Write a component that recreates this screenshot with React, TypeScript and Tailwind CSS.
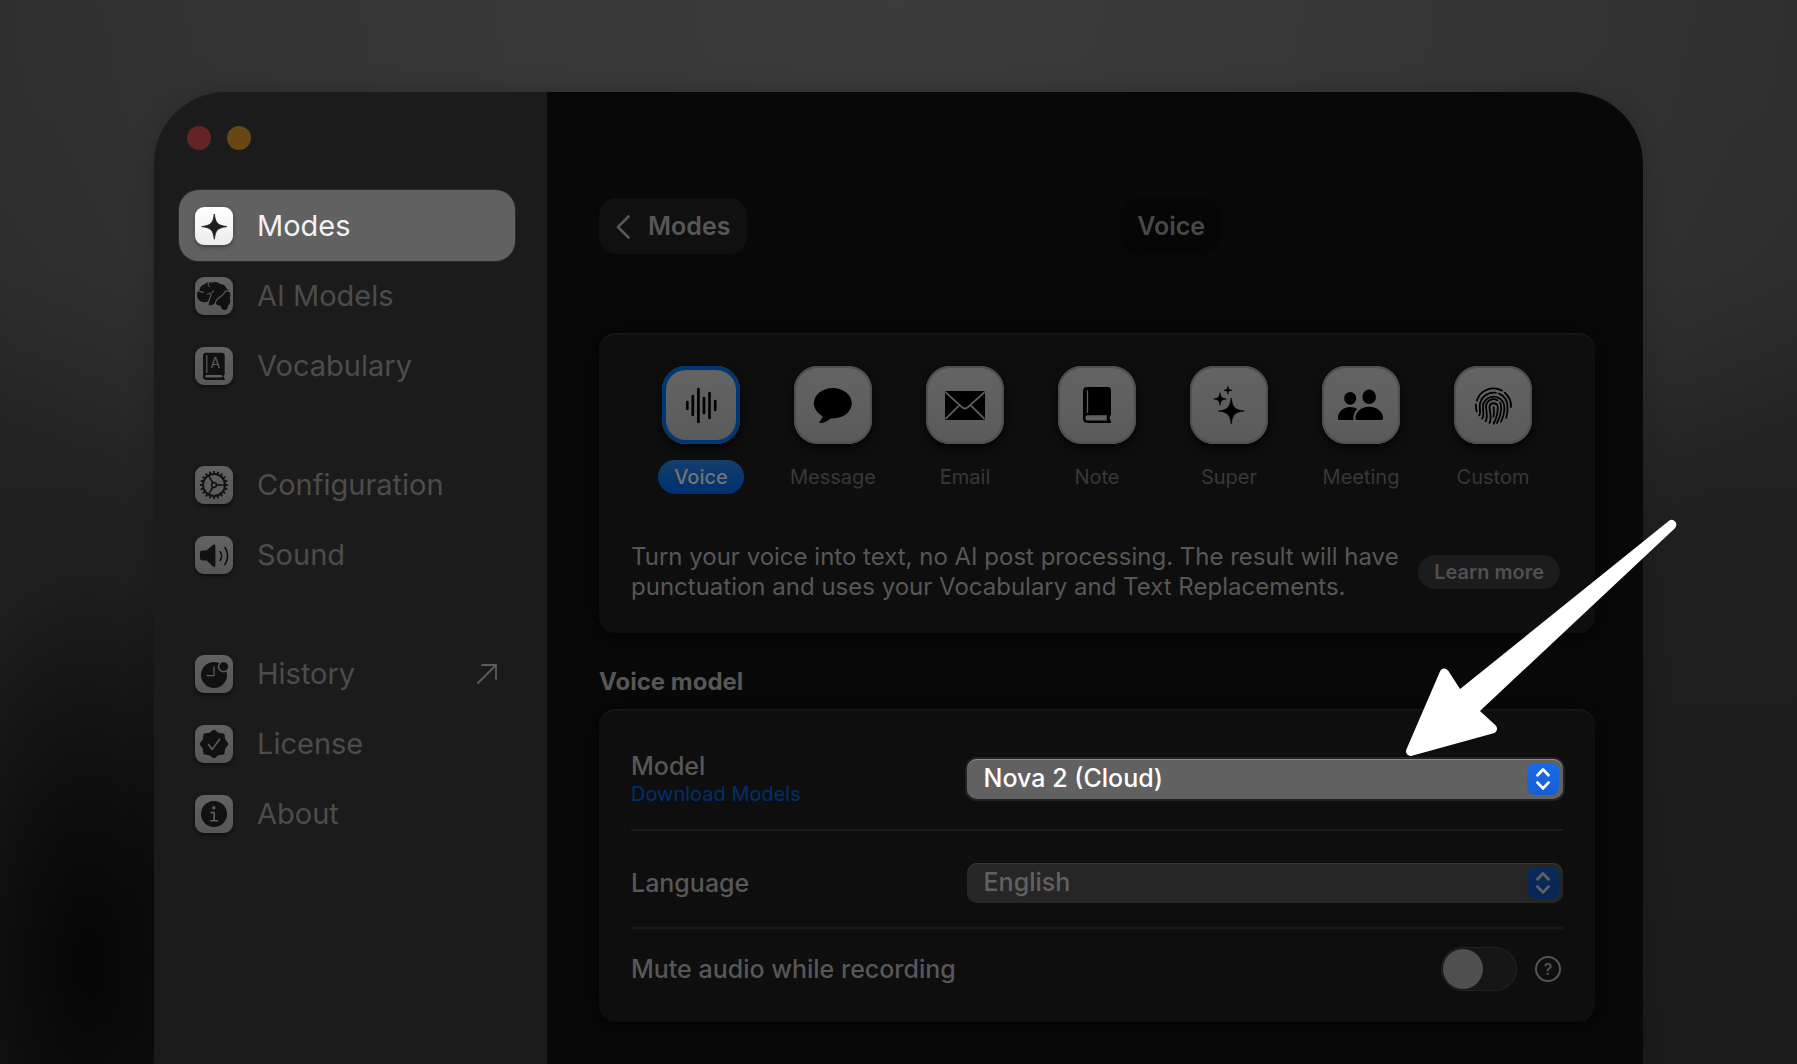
import React, { useState } from "react";

/* ---------- Sidebar glyphs, drawn on a 38 × 38 tile ---------- */

const star = (cx: number, cy: number, r: number) => {
  const a = r * 0.12;
  const b = r * 0.24;
  return (
    `M${cx} ${cy - r}C${cx + a} ${cy - b} ${cx + b} ${cy - a} ${cx + r} ${cy}` +
    `C${cx + b} ${cy + a} ${cx + a} ${cy + b} ${cx} ${cy + r}` +
    `C${cx - a} ${cy + b} ${cx - b} ${cy + a} ${cx - r} ${cy}` +
    `C${cx - b} ${cy - a} ${cx - a} ${cy - b} ${cx} ${cy - r}Z`
  );
};

const around = (count: number) => Array.from({ length: count }, (_, i) => (i * 2 * Math.PI) / count);

const seal = around(16)
  .map((t, i) => {
    const r = i % 2 === 0 ? 13 : 10.8;
    return `${19 + r * Math.sin(t)},${19 - r * Math.cos(t)}`;
  })
  .join(" ");

const glyphs: Record<string, React.ReactNode> = {
  modes: <path d={star(19.3, 19.6, 12.6)} fill="#1e1e1e" stroke="#1e1e1e" strokeWidth="0.8" strokeLinejoin="round" />,
  brain: (
    <>
      <path
        fill="#111"
        d="M2 18C1.9 15.6 2.6 14 4.4 13.2C4.8 10.4 6.5 8 9.5 7.2C12 4.8 14.6 5 16.5 5.8C19 4.3 23 4.6 25 7C28 6.9 30.8 9 31.6 11.5C34.8 13 36.3 17.5 34.8 21C36 24.5 34.8 27.6 32.8 28.6C33.3 31.2 31.8 33.4 29.8 33C27.4 33.1 26 31.5 25.8 29C22.4 28.6 20.8 27.4 20 25.8C18.8 27.9 16.6 28.6 13.8 28.2C13.6 26.6 13.8 25 14 24C10.9 26 5.6 25.8 3.6 22.6C2.5 21.2 2 19.8 2 18Z"
      />
      <g fill="none" stroke="#5d5d5d" strokeWidth="1.1" strokeLinecap="round" strokeLinejoin="round">
        <path d="M3 12.8C4 14.8 6 15.4 8.6 15" />
        <path d="M13.4 5.4C12.8 7.6 13.4 8.8 14.4 9.6" />
        <path d="M12.2 17.2C14 16.2 16.6 17.6 18.4 14" />
        <path d="M16 17C16.4 19.4 15 20.8 14.2 22.4L13.6 25.6" />
        <path d="M35 14.8C31.6 12.8 29.8 14.4 28.8 16.6C27 20 21.6 19.6 20.2 26.4" />
      </g>
    </>
  ),
  book: (
    <>
      <path
        fill="#111"
        d="M11 5.8H27C28.7 5.8 29.7 6.8 29.7 8.4V27.2L28.4 29.4L29.7 31.4V32.9H11.6C9.4 32.9 8 31.6 8 29.4V8.8C8 7 9.2 5.8 11 5.8Z"
      />
      <path d="M11.8 8.6V25.6" stroke="#5d5d5d" strokeWidth="1.2" strokeLinecap="round" />
      <path d="M11.6 29.3H26" stroke="#5d5d5d" strokeWidth="2.6" strokeLinecap="round" />
      <text x="20.3" y="21" fontSize="14" textAnchor="middle" fill="#5d5d5d" fontFamily="Inter, sans-serif">
        A
      </text>
    </>
  ),
  gear: (
    <g fill="none" stroke="#111">
      <circle cx="19" cy="19" r="11" strokeWidth="1.9" />
      <circle cx="19" cy="19" r="2.4" strokeWidth="1.5" />
      {around(20).map((t) => (
        <path
          key={t}
          d={`M${19 + 11.5 * Math.cos(t)} ${19 + 11.5 * Math.sin(t)}L${19 + 14 * Math.cos(t)} ${19 + 14 * Math.sin(t)}`}
          strokeWidth="1.9"
        />
      ))}
      {around(3).map((t) => (
        <path
          key={t}
          d={`M${19 + 2.6 * Math.cos(t)} ${19 + 2.6 * Math.sin(t)}L${19 + 11 * Math.cos(t)} ${19 + 11 * Math.sin(t)}`}
          strokeWidth="1.6"
        />
      ))}
    </g>
  ),
  sound: (
    <>
      <path
        fill="#111"
        d="M7.5 14.6H10.5C11.5 14.6 12 14.1 12.5 13.6L18 8.9C19.4 8 20.4 8.6 20.4 10V29.5C20.4 31 19.1 31.4 18 30.5L12.5 25.3C12 24.8 11.5 24.4 10.5 24.4H7.5C6 24.4 5 23.6 5 22.2V16.8C5 15.4 6 14.6 7.5 14.6Z"
      />
      <path
        d="M25.2 15.8C27 18.2 27 22 25.2 24.4M30 11.6C33.4 16.4 33.4 23.8 30 28.6"
        fill="none"
        stroke="#111"
        strokeWidth="1.7"
        strokeLinecap="round"
      />
    </>
  ),
  history: (
    <>
      <circle cx="19" cy="20" r="13" fill="#111" />
      <path d="M19 12V20.6H12" fill="none" stroke="#5d5d5d" strokeWidth="1.3" strokeLinecap="round" strokeLinejoin="round" />
      <circle cx="28.7" cy="11.6" r="5.2" fill="#111" stroke="#5d5d5d" strokeWidth="1.5" />
    </>
  ),
  license: (
    <>
      <polygon points={seal} fill="#111" stroke="#111" strokeWidth="2.6" strokeLinejoin="round" />
      <path d="M13.6 19.6L17.2 24.4L24.6 14.2" fill="none" stroke="#5d5d5d" strokeWidth="1.6" strokeLinecap="round" strokeLinejoin="round" />
    </>
  ),
  about: (
    <>
      <circle cx="19" cy="19" r="13" fill="#111" />
      <circle cx="18.8" cy="12.8" r="1.7" fill="#5d5d5d" />
      <path d="M16.2 17.6H19.2V25.8M15.8 25.8H22.6" fill="none" stroke="#5d5d5d" strokeWidth="1.6" strokeLinecap="round" strokeLinejoin="round" />
    </>
  ),
};

type NavEntry = { label: string; glyph: string; active?: boolean; external?: boolean };

const navGroups: NavEntry[][] = [
  [
    { label: "Modes", glyph: "modes", active: true },
    { label: "AI Models", glyph: "brain" },
    { label: "Vocabulary", glyph: "book" },
  ],
  [
    { label: "Configuration", glyph: "gear" },
    { label: "Sound", glyph: "sound" },
  ],
  [
    { label: "History", glyph: "history", external: true },
    { label: "License", glyph: "license" },
    { label: "About", glyph: "about" },
  ],
];

function NavItem({ label, glyph, active, external }: NavEntry) {
  return (
    <button
      type="button"
      aria-current={active ? "page" : undefined}
      className={
        "flex w-full items-center rounded-[20px] pl-4 pr-[18px] text-left text-[29px] " +
        (active ? "h-[71px] bg-[#616161] text-[#f2f2f2] shadow-[0_0_0_1px_#2b2b2b]" : "h-[70px] text-[#4c4c4c]")
      }
    >
      <span
        className={
          "h-[38px] w-[38px] shrink-0 rounded-[9px] " +
          (active
            ? "bg-gradient-to-b from-white to-[#ececec] shadow-[0_2px_4px_rgba(0,0,0,0.35)]"
            : "bg-gradient-to-b from-[#626262] to-[#575757] shadow-[0_2px_4px_rgba(0,0,0,0.5)]")
        }
      >
        <svg viewBox="0 0 38 38" className="h-full w-full" aria-hidden="true">
          {glyphs[glyph]}
        </svg>
      </span>
      <span className="ml-6 flex-1">{label}</span>
      {external && (
        <svg viewBox="0 0 20 20" className="h-5 w-5" fill="none" stroke="#5c5c5c" strokeWidth="1.8" strokeLinecap="round" strokeLinejoin="round" aria-hidden="true">
          <path d="M1 19L19 1M5 1H19V15" />
        </svg>
      )}
    </button>
  );
}

/* ---------- Mode glyphs, drawn on a 78 × 78 tile ---------- */

const bars = [
  [25.3, 36, 43],
  [30.8, 30, 49],
  [36.4, 23, 56],
  [42, 32, 47],
  [47.5, 27, 52],
  [53.2, 35, 44],
];

const modes: { label: string; art: React.ReactNode }[] = [
  {
    label: "Voice",
    art: bars.map(([x, top, bottom]) => (
      <path key={x} d={`M${x} ${top}V${bottom}`} stroke="#000" strokeWidth="2.7" strokeLinecap="round" />
    )),
  },
  {
    label: "Message",
    art: (
      <>
        <ellipse cx="38.8" cy="37.3" rx="19" ry="15.2" />
        <path d="M28 47C29.6 51 27.4 53.6 25.6 55.4C24.8 56.8 26 57.4 27.6 56.9C31.6 56 35 54 38 51.4Z" />
      </>
    ),
  },
  {
    label: "Email",
    art: (
      <>
        <rect x="19" y="25" width="40" height="29" rx="1.5" />
        <path
          d="M19.4 26.2L36 41.2C38 43 40 43 42 41.2L58.6 26.2M19.6 52.8L33 39.6M58.4 52.8L45 39.6"
          fill="none"
          stroke="#606060"
          strokeWidth="1.8"
        />
      </>
    ),
  },
  {
    label: "Note",
    art: (
      <>
        <path d="M29 21H49.5C51.8 21 53 22.2 53 24.4V48.4C51.2 50.6 51.2 53 53 55.2V57H29.4C26.4 57 25 55.4 25 52.6V25C25 22.4 26.4 21 29 21Z" />
        <path d="M29.5 24.8V46.2" stroke="#606060" strokeWidth="1.3" strokeLinecap="round" />
        <path d="M29.6 49.2H49.2C48.4 51 48.4 52.8 49.2 54.6H29.6C26.6 54.6 26.6 49.2 29.6 49.2Z" fill="#606060" />
      </>
    ),
  },
  {
    label: "Super",
    art: (
      <g stroke="#000" strokeWidth="0.6" strokeLinejoin="round">
        <path d={star(41.2, 45, 13)} />
        <path d={star(30, 33, 6.4)} />
        <path d={star(37.9, 24.2, 4)} />
      </g>
    ),
  },
  {
    label: "Meeting",
    art: (
      <>
        <ellipse cx="28.2" cy="32.3" rx="6" ry="6.4" />
        <ellipse cx="47.2" cy="30.8" rx="6.8" ry="7.3" />
        <path d="M18 54C16.6 54 16 53.4 16 52C16 46 21 41 28 41C31 41 33.4 41.8 35.2 43C32.2 45.8 31 49.8 31.4 54Z" />
        <path d="M35.4 54C34 54 33.4 53.4 33.4 52C33.4 46.4 39 40.8 47.2 40.8C55.4 40.8 61 46.4 61 52C61 53.4 60.4 54 59 54Z" />
      </>
    ),
  },
  {
    label: "Custom",
    art: (
      <g fill="none" stroke="#000" strokeWidth="1.8" strokeLinecap="round">
        <path d="M22.8 34.6A17.6 17.6 0 0 1 48 24.6" />
        <path d="M50.8 26.8A17.6 17.6 0 0 1 57 41" />
        <path d="M22 38.4C21.6 41 22 43.4 22.8 45.4" />
        <path d="M25.2 49.4C26.8 47 26 44 25.7 40.8A14 14 0 0 1 42 26.8" />
        <path d="M45 27.6A14 14 0 0 1 53.5 40C53.8 44 53.4 48 52.2 51.8" />
        <path d="M28 52.6C30.6 50 29 45 28.8 40.8A10.8 10.8 0 0 1 50.3 40C50.6 45.5 49.5 51 47 55.6" />
        <path d="M31.6 55.2C34.2 51.5 32.2 45 32 40.6A7.6 7.6 0 0 1 43.6 34.4" />
        <path d="M46 36.6C47.2 38.6 47.2 42 47 44.6C46.6 49.4 45.2 53.4 43 57" />
        <path d="M35.6 57C38 52.5 35.6 45 35.5 40.8A4.2 4.2 0 0 1 43.8 40.8C44 47 42.5 52.5 39.6 57.8" />
        <path d="M39.7 41.2C40 45 40.2 47.6 39.4 50.6" />
      </g>
    ),
  },
];

function ModeTile({ label, art, selected, onSelect }: { label: string; art: React.ReactNode; selected: boolean; onSelect: () => void }) {
  return (
    <button type="button" aria-pressed={selected} onClick={onSelect} className="flex flex-col items-center gap-4">
      <span
        className={
          "h-[78px] w-[78px] rounded-[24px] bg-gradient-to-b from-[#646464] to-[#5a5a5a] " +
          (selected
            ? "shadow-[inset_0_0_0_4px_#003674,0_4px_8px_rgba(0,0,0,0.75)]"
            : "shadow-[inset_0_0_0_2px_#4f4f4f,0_4px_8px_rgba(0,0,0,0.75)]")
        }
      >
        <svg viewBox="0 0 78 78" className="h-full w-full" aria-hidden="true">
          {art}
        </svg>
      </span>
      <span
        className={
          "flex h-[34px] items-center rounded-full px-4 text-[20px] " +
          (selected ? "bg-gradient-to-b from-[#133f6b] to-[#003070] font-medium text-[#737373]" : "text-[#383838]")
        }
      >
        {label}
      </span>
    </button>
  );
}

function Picker({ id, options, lit }: { id: string; options: string[]; lit?: boolean }) {
  return (
    <>
      <select
        id={id}
        className={
          "h-10 w-full appearance-none rounded-[10px] pb-0.5 pl-[17px] pr-12 text-[25px] font-medium leading-8 outline-none " +
          (lit
            ? "bg-[#616161] text-white shadow-[inset_0_1px_0_#8a8a8a,0_0_0_2px_#232323]"
            : "bg-[#262626] text-[#616161] shadow-[inset_0_1px_0_#363636]")
        }
      >
        {options.map((o) => (
          <option key={o}>{o}</option>
        ))}
      </select>
      <span
        className={
          "pointer-events-none absolute right-1 top-1 flex h-8 w-8 items-center justify-center rounded-[8px] " +
          (lit ? "bg-gradient-to-b from-[#1a6ae8] to-[#165fd2] text-white" : "bg-gradient-to-b from-[#0a2a5c] to-[#082653] text-[#616161]")
        }
      >
        <svg viewBox="0 0 32 32" className="h-8 w-8" fill="none" stroke="currentColor" strokeWidth="2.8" strokeLinecap="round" strokeLinejoin="round" aria-hidden="true">
          <path d="M10.5 12.2L16 6.4L21.5 12.2M10.5 19.6L16 25.4L21.5 19.6" />
        </svg>
      </span>
    </>
  );
}

const card = "rounded-[16px] bg-[#0e0e0e] shadow-[inset_0_2px_1px_#161616,0_2px_14px_#030303]";

export default function App() {
  const [mode, setMode] = useState("Voice");

  return (
    <div className="flex min-h-screen flex-col bg-[#242424] bg-[radial-gradient(ellipse_190px_400px_at_90px_960px,rgba(4,4,4,0.95)_0%,rgba(5,5,5,0.65)_40%,transparent_100%),radial-gradient(ellipse_60%_70%_at_50%_0%,#3b3b3b_0%,#373737_45%,transparent_100%),linear-gradient(to_bottom,#2c2c2c_0%,#2b2b2b_25%,#1f1f1f_50%,#1b1b1b_100%)] px-[154px] pt-[92px] font-['Inter',sans-serif]">
      <div className="flex flex-1 rounded-t-[72px] shadow-[0_0_24px_rgba(0,0,0,0.2)]">
        <aside className="w-[393px] shrink-0 rounded-tl-[72px] bg-[#1b1b1b] pl-[25px] pr-8 pt-[34px]">
          <div className="flex gap-4 pl-2">
            <button type="button" aria-label="Close window" className="h-6 w-6 rounded-full bg-[#632523]" />
            <button type="button" aria-label="Minimize window" className="h-6 w-6 rounded-full bg-[#654813]" />
          </div>
          <nav className="mt-10 flex flex-col gap-[49px]">
            {navGroups.map((group) => (
              <div key={group[0].label}>
                {group.map((item) => (
                  <NavItem key={item.label} {...item} />
                ))}
              </div>
            ))}
          </nav>
        </aside>

        <main className="min-w-0 flex-1 rounded-tr-[72px] bg-[#080808] pb-[42px] pl-[52px] pr-12 pt-[106px] text-[#575757]">
          <header className="flex items-center">
            <button type="button" className="flex h-14 items-center gap-[18px] rounded-[18px] bg-[#101010] px-[17px] pt-0.5 text-[25px] font-semibold">
              <svg viewBox="0 0 14 24" className="h-6 w-[14px]" fill="none" stroke="currentColor" strokeWidth="2.6" strokeLinecap="round" strokeLinejoin="round" aria-hidden="true">
                <path d="M12.5 1.5L2 12L12.5 22.5" />
              </svg>
              Modes
            </button>
            <div className="flex flex-1 justify-center">
              <h1 className="flex h-14 items-center rounded-[18px] bg-[#060606] px-4 pt-0.5 text-[25px] font-semibold text-[#484848]">Voice</h1>
            </div>
          </header>

          <section className={"mt-[79px] pb-[31px] pt-[33px] " + card}>
            <div className="grid grid-cols-7 px-9">
              {modes.map((m) => (
                <ModeTile key={m.label} label={m.label} art={m.art} selected={mode === m.label} onSelect={() => setMode(m.label)} />
              ))}
            </div>
            <div className="mt-12 flex items-center justify-between pl-8 pr-[35px]">
              <p className="text-[24px] leading-[30px]">
                Turn your voice into text, no AI post processing. The result will have
                <br />
                punctuation and uses your Vocabulary and Text Replacements.
              </p>
              <button type="button" className="h-[34px] shrink-0 rounded-full bg-[#1c1c1c] px-4 text-[20px] font-semibold leading-8 text-[#505050]">
                Learn more
              </button>
            </div>
          </section>

          <h2 className="mt-[33px] text-[24px] font-bold leading-8">Voice model</h2>

          <section className={"mt-[11px] px-8 pb-[31px] pt-[42px] " + card}>
            <div className="flex items-center justify-between border-b-2 border-[#1a1a1a] pb-[22px]">
              <div className="flex flex-col">
                <label htmlFor="model" className="text-[25px] font-medium leading-[30px]">
                  Model
                </label>
                <a href="#models" className="text-[20px] leading-[26px] text-[#003069]">
                  Download Models
                </a>
              </div>
              <div className="relative w-[64%]">
                <Picker id="model" options={["Nova 2 (Cloud)"]} lit />
                <svg viewBox="0 0 280 245" className="pointer-events-none absolute bottom-full -right-[117px] z-10 h-[245px] w-[280px]" aria-hidden="true">
                  <path
                    d="M271.7 10.7L59 182L44.3 159.3L10.7 237.3L92.3 214.7L73 197Z"
                    fill="#fff"
                    stroke="#fff"
                    strokeWidth="9.4"
                    strokeLinejoin="round"
                  />
                </svg>
              </div>
            </div>

            <div className="flex items-center justify-between border-b-2 border-[#1a1a1a] pb-6 pt-8">
              <label htmlFor="language" className="text-[25px] font-medium leading-10">
                Language
              </label>
              <div className="relative w-[64%]">
                <Picker id="language" options={["English"]} />
              </div>
            </div>

            <div className="flex items-center justify-between pt-[18px]">
              <label htmlFor="mute" className="text-[25px] font-medium leading-10">
                Mute audio while recording
              </label>
              <div className="flex items-center gap-[18px]">
                <input
                  id="mute"
                  type="checkbox"
                  role="switch"
                  className="h-11 w-[76px] appearance-none rounded-full bg-[#161616] p-0.5 shadow-[inset_0_0_0_1px_#222222] before:block before:h-10 before:w-10 before:rounded-full before:bg-[#4f4f4f] checked:bg-[#003674] checked:before:ml-8"
                />
                <button type="button" aria-label="Help" className="mr-0.5 flex h-[26px] w-[26px] items-center justify-center rounded-full border-2 border-[#555555] text-[16px] font-medium leading-none">
                  ?
                </button>
              </div>
            </div>
          </section>
        </main>
      </div>
    </div>
  );
}
